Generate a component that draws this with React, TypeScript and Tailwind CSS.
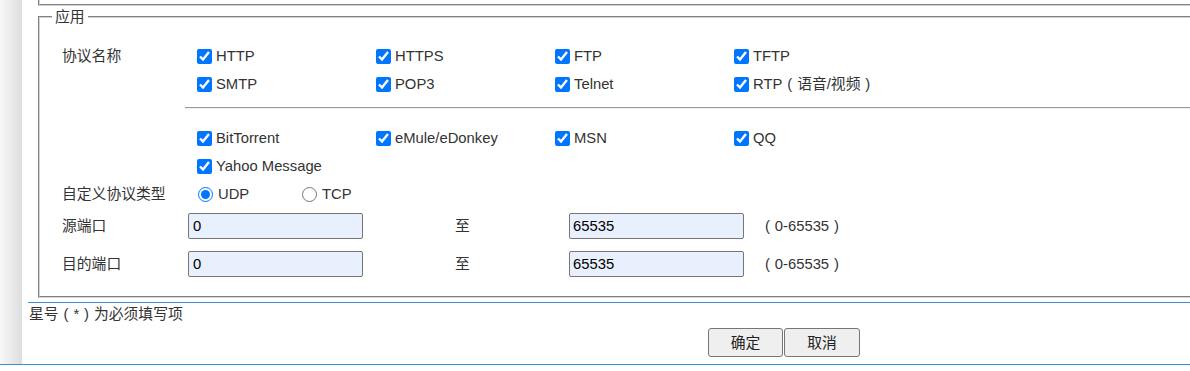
import React from 'react';

// full-width bracket: glyph centred in a one-em box
const FW: React.FC<{ children: React.ReactNode }> = ({ children }) => (
  <span className="inline-block w-[1em] text-center">{children}</span>
);

const commonRows: React.ReactNode[][] = [
  ['HTTP', 'HTTPS', 'FTP', 'TFTP'],
  ['SMTP', 'POP3', 'Telnet', <>RTP<FW>(</FW>语音/视频<FW>)</FW></>],
];

const chatRows: React.ReactNode[][] = [
  ['BitTorrent', 'eMule/eDonkey', 'MSN', 'QQ'],
  ['Yahoo Message'],
];

const ProtoCheck: React.FC<{ label: React.ReactNode }> = ({ label }) => (
  <label className="flex items-center gap-[4px] h-[28px] whitespace-nowrap">
    <input type="checkbox" defaultChecked className="m-0 w-[15px] h-[15px] accent-[#0075ff]" />
    <span>{label}</span>
  </label>
);

const CheckGrid: React.FC<{ rows: React.ReactNode[][] }> = ({ rows }) => (
  <div className="pl-[12px]">
    {rows.map((row, i) => (
      <div key={i} className="grid grid-cols-[179px_179px_179px_179px]">
        {row.map((p, j) => (
          <ProtoCheck key={j} label={p} />
        ))}
      </div>
    ))}
  </div>
);

const PortRow: React.FC<{ label: string }> = ({ label }) => (
  <div className="flex items-center h-[38px]">
    <div className="w-[133px] pl-[10px]">{label}</div>
    <div className="w-[270px]">
      <input
        type="text"
        defaultValue="0"
        className="ml-[3px] w-[175px] h-[26px] px-[4px] bg-[#e8f0fe] border border-[#767676] rounded-[2px] text-black outline-none"
      />
    </div>
    <div className="w-[114px]">至</div>
    <input
      type="text"
      defaultValue="65535"
      className="w-[175px] h-[26px] px-[3px] bg-[#e8f0fe] border border-[#767676] rounded-[2px] text-black outline-none"
    />
    <span className="ml-[16px]">
      <FW>(</FW>0-65535<FW>)</FW>
    </span>
  </div>
);

const App: React.FC = () => {
  return (
    <div className="w-[1190px] h-[371px] overflow-hidden bg-white text-[14.8px] leading-5 text-[#333] font-['Liberation_Sans','Noto_Sans_CJK_SC',sans-serif]">
      <div className="flex h-[364px]">
        <div className="w-[22px] shrink-0 bg-linear-to-r from-[#f8f8f8] to-[#dddddd]" />
        <div className="flex-1 min-w-0 flex flex-col">
          {/* bottom of the previous group */}
          <div className="ml-[16px] w-[1200px] h-[6px] border-l-2 border-b-2 [border-style:groove] border-[#d4d4d4]" />

          <fieldset className="ml-[16px] w-[1200px] border-2 [border-style:groove] border-[#d4d4d4] pl-[12px] pb-[13px]">
            <legend className="px-[3px] leading-[22px]">应用</legend>

            <div className="pt-[14px] flex">
              <div className="w-[133px] pl-[10px] h-[28px] flex items-center">协议名称</div>
              <div className="flex-1">
                <CheckGrid rows={commonRows} />
              </div>
            </div>

            <div className="ml-[133px] mt-[9px] mb-[15px] border-t border-b border-t-[#9a9a9a] border-b-[#eeeeee]" />

            <div className="flex">
              <div className="w-[133px]" />
              <div className="flex-1">
                <CheckGrid rows={chatRows} />
              </div>
            </div>

            <div className="flex items-center h-[26px] mt-[1px]">
              <div className="w-[133px] pl-[10px]">自定义协议类型</div>
              <label className="flex items-center gap-[5px] pl-[13px] w-[117px]">
                <input type="radio" name="ptype" defaultChecked className="m-0 w-[15px] h-[15px] accent-[#0075ff]" />
                <span>UDP</span>
              </label>
              <label className="flex items-center gap-[5px]">
                <input type="radio" name="ptype" className="m-0 w-[15px] h-[15px]" />
                <span>TCP</span>
              </label>
            </div>

            <PortRow label="源端口" />
            <PortRow label="目的端口" />
          </fieldset>

          <div className="mt-[4px] ml-[6px] border-t border-[#3d8fd6]" />
          <div className="ml-[7px] mt-[1px]">
            星号<FW>(</FW>*<FW>)</FW>为必须填写项
          </div>
          <div className="flex pl-[686px] mt-[4px] gap-[1px]">
            <button className="w-[75px] h-[29px] bg-[#efefef] border border-[#767676] rounded-[3px] text-[#222]">确定</button>
            <button className="w-[76px] h-[29px] bg-[#efefef] border border-[#767676] rounded-[3px] text-[#222]">取消</button>
          </div>
        </div>
      </div>
      <div className="border-t border-[#3d8fd6]" />
    </div>
  );
};

export default App;
